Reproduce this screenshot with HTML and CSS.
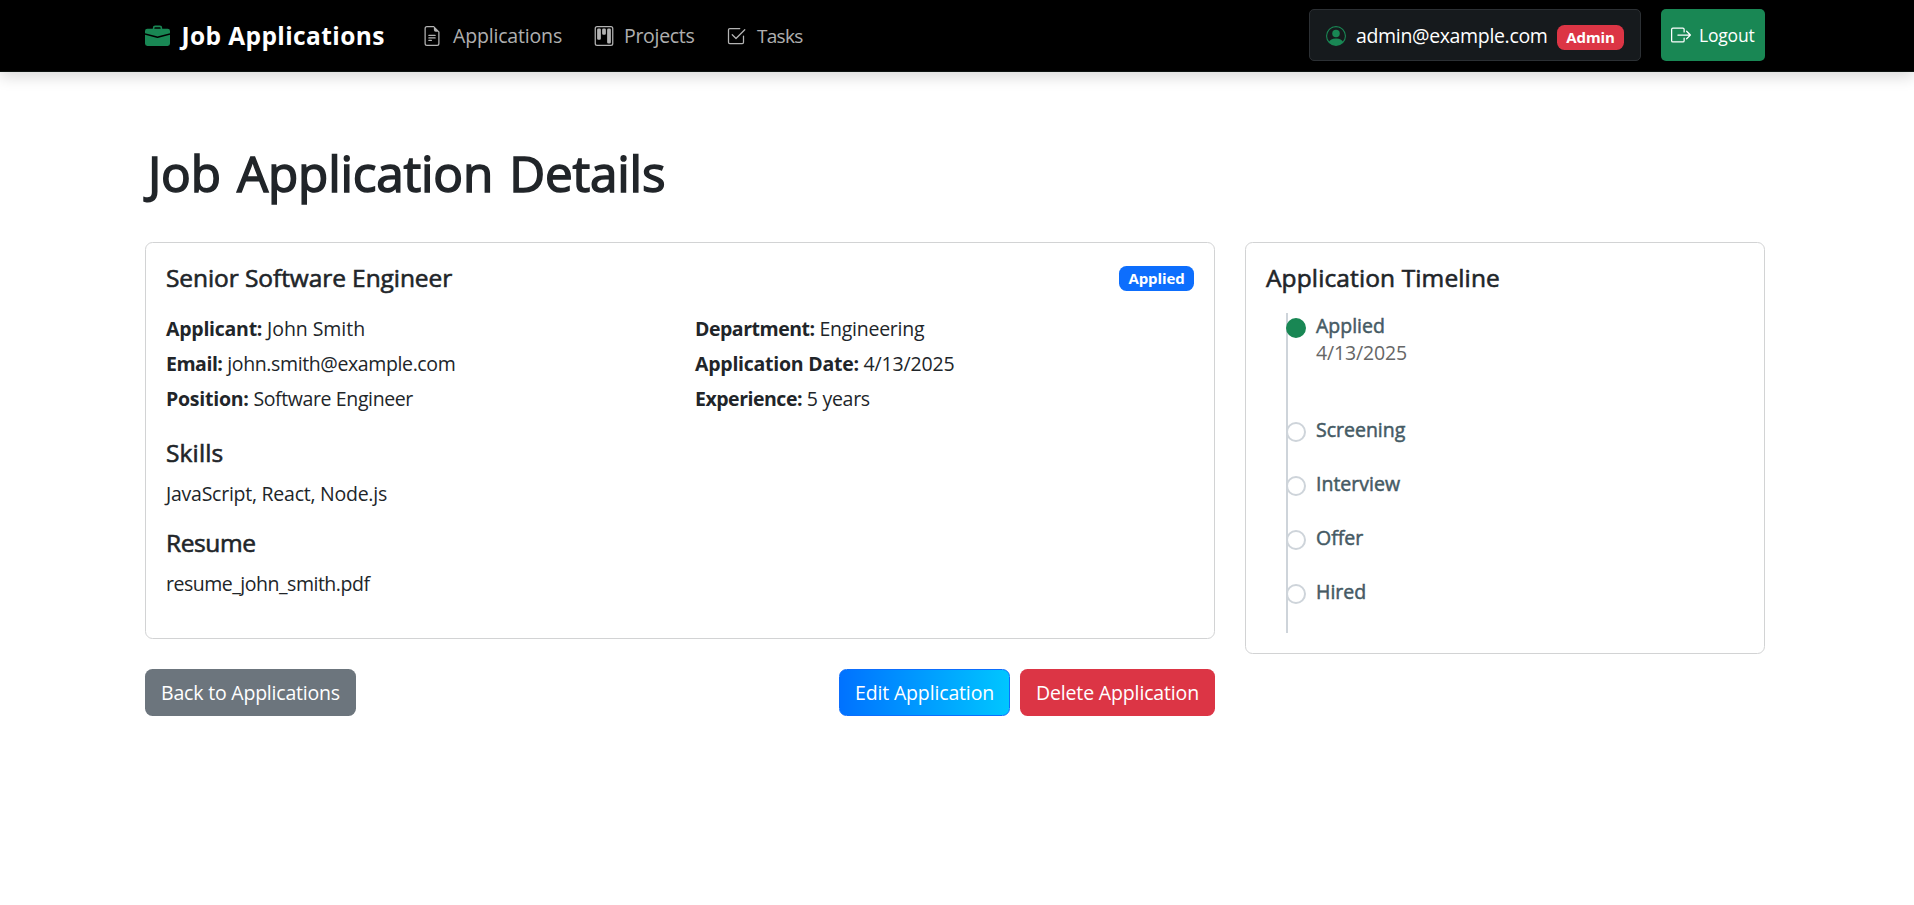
FILE: index.html
```
<!DOCTYPE html>
<html lang="en">
<head>
<meta charset="utf-8">
<title>Job Application Details</title>
<link rel="stylesheet" href="styles.css">
</head>
<body>
<header class="navbar">
  <div class="container navbar-inner">
    <a class="brand"><svg class="icon brand-icon" viewBox="0 0 16 16"><path d="M6.5 1A1.5 1.5 0 0 0 5 2.5V3H1.5A1.5 1.5 0 0 0 0 4.500v1.384l7.614 2.030a1.500 1.500 0 0 0 .772 0L16 5.884V4.500A1.500 1.500 0 0 0 14.500 3H11v-.500A1.500 1.500 0 0 0 9.500 1zm0 1h3a.5.5 0 0 1 .5.5V3H6v-.5a.5.5 0 0 1 .5-.5"/><path d="M0 12.500A1.500 1.500 0 0 0 1.500 14h13a1.500 1.500 0 0 0 1.500-1.500V6.850L8.129 8.947a.5.5 0 0 1-.258 0L0 6.850z"/></svg><span class="brand-text">Job Applications</span></a>
    <nav class="nav">
      <a class="nav-link"><svg class="icon" viewBox="0 0 16 16"><path d="M5.500 7a.5.5 0 0 0 0 1h5a.5.5 0 0 0 0-1zM5 9.500a.5.5 0 0 1 .5-.5h5a.5.5 0 0 1 0 1h-5a.5.5 0 0 1-.5-.5m0 2a.5.5 0 0 1 .5-.5h2a.5.5 0 0 1 0 1h-2a.5.5 0 0 1-.5-.5"/><path d="M9.500 0H4a2 2 0 0 0-2 2v12a2 2 0 0 0 2 2h8a2 2 0 0 0 2-2V4.500zm0 1v2A1.500 1.500 0 0 0 11 4.500h2V14a1 1 0 0 1-1 1H4a1 1 0 0 1-1-1V2a1 1 0 0 1 1-1z"/></svg><span>Applications</span></a>
      <a class="nav-link"><svg class="icon" viewBox="0 0 16 16"><path d="M13.500 1a1 1 0 0 1 1 1v12a1 1 0 0 1-1 1h-11a1 1 0 0 1-1-1V2a1 1 0 0 1 1-1zm-11-1a2 2 0 0 0-2 2v12a2 2 0 0 0 2 2h11a2 2 0 0 0 2-2V2a2 2 0 0 0-2-2z"/><path d="M6.500 3a1 1 0 0 1 1-1h1a1 1 0 0 1 1 1v3a1 1 0 0 1-1 1h-1a1 1 0 0 1-1-1zm-4 0a1 1 0 0 1 1-1h1a1 1 0 0 1 1 1v7a1 1 0 0 1-1 1h-1a1 1 0 0 1-1-1zm8 0a1 1 0 0 1 1-1h1a1 1 0 0 1 1 1v10a1 1 0 0 1-1 1h-1a1 1 0 0 1-1-1z"/></svg><span class="projects">Projects</span></a>
      <a class="nav-link"><svg class="icon" viewBox="0 0 16 16"><path d="M3 14.500A1.500 1.500 0 0 1 1.500 13V3A1.500 1.500 0 0 1 3 1.500h8a.5.5 0 0 1 0 1H3a.5.5 0 0 0-.5.5v10a.5.5 0 0 0 .5.5h10a.5.5 0 0 0 .5-.5V8a.5.5 0 0 1 1 0v5a1.500 1.500 0 0 1-1.500 1.500z"/><path d="m8.354 10.354 7-7a.5.5 0 0 0-.708-.708L8 9.293 5.354 6.646a.5.5 0 1 0-.708.708l3 3a.5.5 0 0 0 .708 0"/></svg><span class="tight">Tasks</span></a>
    </nav>
    <div class="account">
      <div class="user"><svg class="icon user-icon" viewBox="0 0 16 16"><path d="M11 6a3 3 0 1 1-6 0 3 3 0 0 1 6 0"/><path fill-rule="evenodd" d="M0 8a8 8 0 1 1 16 0A8 8 0 0 1 0 8m8-7a7 7 0 0 0-5.468 11.370C3.242 11.226 4.805 10 8 10s4.757 1.225 5.468 2.370A7 7 0 0 0 8 1"/></svg><span class="user-email">admin@example.com</span><span class="badge badge-danger">Admin</span></div>
      <button class="logout"><svg class="icon" viewBox="0 0 16 16"><path fill-rule="evenodd" d="M10 12.500a.5.5 0 0 1-.5.5h-8a.5.5 0 0 1-.5-.5v-9a.5.5 0 0 1 .5-.5h8a.5.5 0 0 1 .5.5v2a.5.5 0 0 0 1 0v-2A1.500 1.500 0 0 0 9.500 2h-8A1.500 1.500 0 0 0 0 3.500v9A1.500 1.500 0 0 0 1.500 14h8a1.500 1.500 0 0 0 1.500-1.500v-2a.5.5 0 0 0-1 0z"/><path fill-rule="evenodd" d="M15.854 8.354a.5.5 0 0 0 0-.708l-3-3a.5.5 0 0 0-.708.708L14.293 7.500H5.500a.5.5 0 0 0 0 1h8.793l-2.147 2.146a.5.5 0 0 0 .708.708z"/></svg><span>Logout</span></button>
    </div>
  </div>
</header>
<main class="container">
  <h1>Job Application Details</h1>
  <div class="layout">
    <section class="main-column">
      <article class="card">
        <div class="card-header"><h2>Senior Software Engineer</h2><span class="badge badge-primary">Applied</span></div>
        <div class="facts">
          <p><strong>Applicant:</strong> <span class="value-name">John Smith</span></p>
          <p><strong class="snug">Department:</strong> <span>Engineering</span></p>
          <p><strong class="snug">Email:</strong> <span class="value-email">john.smith@example.com</span></p>
          <p><strong>Application Date:</strong> <span class="value-date">4/13/2025</span></p>
          <p><strong>Position:</strong> <span class="value-email">Software Engineer</span></p>
          <p><strong class="snug">Experience:</strong> <span class="value-years">5 years</span></p>
        </div>
        <h2 class="skills-title">Skills</h2>
        <p class="section-text">JavaScript, React, Node.js</p>
        <h2 class="resume-title">Resume</h2>
        <p class="section-text file-name">resume_john_smith.pdf</p>
      </article>
      <div class="actions">
        <button class="btn btn-secondary">Back to Applications</button>
        <div class="actions-right">
          <button class="btn btn-edit">Edit Application</button>
          <button class="btn btn-danger">Delete Application</button>
        </div>
      </div>
    </section>
    <aside class="card">
      <h2 class="timeline-title">Application Timeline</h2>
      <ol class="timeline">
        <li class="step done"><span class="dot"></span><div><h3>Applied</h3><p class="date">4/13/2025</p></div></li>
        <li class="step"><span class="dot"></span><h3>Screening</h3></li>
        <li class="step"><span class="dot"></span><h3>Interview</h3></li>
        <li class="step"><span class="dot"></span><h3>Offer</h3></li>
        <li class="step"><span class="dot"></span><h3>Hired</h3></li>
      </ol>
    </aside>
  </div>
</main>
</body>
</html>
```
FILE: styles.css
```
* { box-sizing: border-box; }
body { margin: 0; background: #fff; color: #212529; font: 19.5px/30px "Open Sans", "Noto Sans", sans-serif; }
h1, h2, h3, p, ol { margin: 0; padding: 0; }
.container { width: 1620px; margin-left: 145px; }
.icon { width: 20px; height: 20px; fill: currentColor; flex: none; }

.navbar { height: 72px; background: #000; border-bottom: 1px solid #0d1411; box-shadow: 0 5px 14px rgba(0, 0, 0, .15); }
.navbar-inner { height: 71px; display: flex; align-items: center; padding-top: 1px; }
.brand { display: flex; align-items: center; gap: 11.5px; width: 277px; color: #fff; font-size: 24.5px; font-weight: 700; letter-spacing: .4px; }
.brand-icon { width: 25px; height: 25px; color: #198754; }
.nav { display: grid; grid-template-columns: 172px 132px 90px; color: rgba(255, 255, 255, .7); letter-spacing: -.17px; }
.nav-link { display: flex; align-items: center; gap: 11px; }
.nav-link .projects { margin-left: -1px; letter-spacing: -.3px; }
.nav-link .tight { font-size: 19px; letter-spacing: -.7px; }
.account { margin-left: auto; display: flex; gap: 20px; height: 54px; }
.user { width: 332px; height: 52px; display: flex; align-items: center; padding: 2px 16px 0; color: #fff; background: #161a1d; border: 1px solid #2c3034; border-radius: 5px; }
.user-icon { color: #198754; margin-right: 10px; }
.user-email { letter-spacing: -.34px; }
.badge { display: flex; align-items: center; justify-content: center; height: 25px; border-radius: 7.5px; color: #fff; font-size: 15px; font-weight: 700; line-height: 15px; letter-spacing: -.1px; }
.badge-danger { width: 67px; background: #dc3545; margin: 2px 0 0 auto; }
.badge-primary { width: 75px; background: #0d6efd; }
.logout { width: 104px; height: 52px; border: 0; border-radius: 5px; background: #198754; color: #fff; font: inherit; font-size: 17.5px; letter-spacing: -.2px; display: flex; align-items: center; padding: 0 10px; gap: 8px; }

h1 { font-size: 49.5px; font-weight: 500; line-height: 60px; padding: 71px 0 0 3px; margin-bottom: 39px; letter-spacing: -.2px; word-spacing: 3.5px; -webkit-text-stroke: 1.5px currentColor; }
h2 { font-size: 24.5px; font-weight: 500; line-height: 30px; letter-spacing: -.08px; -webkit-text-stroke: .6px currentColor; }
h3 { font-size: 19.5px; font-weight: 500; line-height: 24px; color: #455a64; -webkit-text-stroke: .5px currentColor; }
.layout { display: grid; grid-template-columns: 1070px 520px; gap: 30px; align-items: start; }
.card { border: 1px solid #d2d3d4; border-radius: 7.5px; padding: 20px; }
.card-header { display: flex; justify-content: space-between; align-items: center; }
.facts { display: grid; grid-template-columns: 529px 1fr; row-gap: 5px; margin: 21px 0 24px; letter-spacing: -.25px; }
.facts strong { letter-spacing: -.25px; }
.facts .snug { letter-spacing: -.48px; }
.value-name { letter-spacing: -.05px; }
.value-email { letter-spacing: -.38px; }
.value-date { letter-spacing: -.15px; }
.value-years { letter-spacing: -.3px; }
.skills-title { letter-spacing: .15px; }
.resume-title { letter-spacing: -.4px; }
.timeline-title { letter-spacing: .12px; }
.section-text { margin: 11px 0 19px; letter-spacing: -.25px; }
.file-name { letter-spacing: -.48px; }
.main-column .card { height: 397px; }

.actions { display: flex; justify-content: space-between; margin-top: 30px; }
.actions-right { display: flex; gap: 10px; }
.btn { height: 47px; border: 0; border-radius: 7.5px; padding: 1px 0 0; color: #fff; font: inherit; white-space: nowrap; letter-spacing: -.15px; }
.btn-secondary { width: 211px; background: #6c757d; letter-spacing: -.2px; }
.btn-edit { width: 171px; border: 1px solid #0d6efd; background: linear-gradient(to right, #0072ff, #00c6ff); }
.btn-danger { width: 195px; background: #dc3545; }

.timeline { list-style: none; height: 320px; margin: 20px 0 0 20px; border-left: 2px solid #ced4da; }
.step { display: flex; align-items: flex-start; gap: 10px; height: 54px; margin-left: -2px; padding-top: 1px; }
.step.done { height: 104px; }
.dot { width: 20px; height: 20px; margin-top: 4px; flex: none; border: 2px solid #ced4da; border-radius: 50%; background: #fff; }
.done .dot { border-color: #198754; background: #198754; }
.date { color: #666; letter-spacing: -.15px; line-height: 29px; }
```
